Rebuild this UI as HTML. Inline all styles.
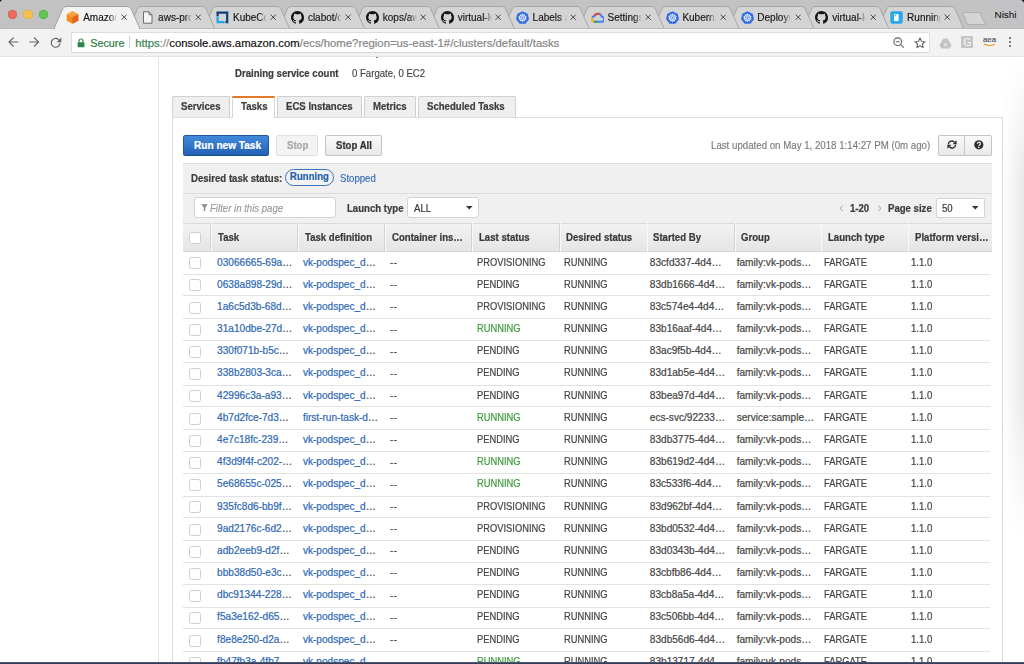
<!DOCTYPE html>
<html><head><meta charset="utf-8"><style>
html,body{margin:0;padding:0;width:1024px;height:664px;overflow:hidden;background:#fff;}
body{position:relative;font-family:"Liberation Sans", sans-serif;}
.r{position:absolute;}
.t{position:absolute;white-space:nowrap;font-family:"Liberation Sans", sans-serif;}
.t.n{-webkit-text-stroke:0.2px currentColor;}
.tabt{overflow:hidden;}
</style></head><body>
<div class="r" style="left:0.00px;top:0.00px;width:1024.00px;height:29.00px;background:linear-gradient(90deg,#c2c2c2,#c3c3c5)"></div>
<div class="r" style="left:0.00px;top:0.00px;width:2.50px;height:2.50px;background:radial-gradient(circle at 2.5px 2.5px, transparent 2px, #1a1a1a 2.5px)"></div>
<div class="r" style="left:1021.00px;top:0.00px;width:3.00px;height:3.00px;background:radial-gradient(circle at 0px 3px, transparent 2.4px, #0c1226 3px)"></div>
<div class="r" style="left:7.80px;top:9.70px;width:9.60px;height:9.60px;background:#ee6a5f;border-radius:50%;box-shadow:inset 0 0 0 0.5px #d8574c"></div>
<div class="r" style="left:23.40px;top:9.70px;width:9.60px;height:9.60px;background:#f5bf4f;border-radius:50%;box-shadow:inset 0 0 0 0.5px #d9a53a"></div>
<div class="r" style="left:38.80px;top:9.70px;width:9.60px;height:9.60px;background:#61c454;border-radius:50%;box-shadow:inset 0 0 0 0.5px #4aa83d"></div>
<svg class="r" style="left:0;top:0" width="1024" height="30" viewBox="0 0 1024 30"><path d="M877.90,28.5 L886.70,8.7 Q887.90,6.5 889.90,6.5 L951.70,6.5 Q953.70,6.5 954.90,8.7 L963.70,28.5 Z" fill="#d4d4d4" stroke="#a2a2a2" stroke-width="0.9"/></svg>
<svg class="r" style="left:890.30px;top:11.20px" width="13" height="13" viewBox="0 0 13 13"><rect x="0.3" y="0.3" width="12.4" height="12.4" rx="2" fill="#2aa7e8"/><path d="M4,3 H8.6 V10 H4 V5.2 Z" fill="#fff"/><path d="M4,5.2 L6.2,3 V5.2 Z" fill="#2aa7e8"/></svg>
<div class="t tabt" style="-webkit-text-stroke:0.15px currentColor;left:907.10px;top:12.84px;width:34px;font-size:10px;line-height:10px;color:#161616;-webkit-mask-image:linear-gradient(90deg,#000 78%,transparent 100%)">Running Tasks</div>
<svg class="r" style="left:944.40px;top:14.40px" width="6.4" height="6.4" viewBox="0 0 6.4 6.4"><path d="M0.6,0.6 L5.8,5.8 M5.8,0.6 L0.6,5.8" stroke="#404040" stroke-width="0.95"/></svg>
<svg class="r" style="left:0;top:0" width="1024" height="30" viewBox="0 0 1024 30"><path d="M803.00,28.5 L811.80,8.7 Q813.00,6.5 815.00,6.5 L876.80,6.5 Q878.80,6.5 880.00,8.7 L888.80,28.5 Z" fill="#d4d4d4" stroke="#a2a2a2" stroke-width="0.9"/></svg>
<svg class="r" style="left:815.40px;top:11.20px" width="13" height="13" viewBox="0 0 13 13"><g transform="scale(0.8125)"><path fill-rule="evenodd" fill="#141414" d="M8 0C3.58 0 0 3.58 0 8c0 3.54 2.29 6.53 5.47 7.59.4.07.55-.17.55-.38 0-.19-.01-.82-.01-1.49-2.01.37-2.53-.49-2.69-.94-.09-.23-.48-.94-.82-1.13-.28-.15-.68-.52-.01-.53.63-.01 1.08.58 1.23.82.72 1.21 1.870.87 2.330.66.07-.52.28-.87.51-1.07-1.78-.2-3.64-.89-3.64-3.95 0-.87.31-1.59.82-2.150-.08-.2-.36-1.02.08-2.12 0 0 .67-.21 2.2.82.64-.18 1.32-.27 2-.27.68 0 1.36.09 2 .27 1.53-1.04 2.2-.82 2.2-.82.44 1.1.16 1.92.08 2.12.51.56.82 1.27.82 2.15 0 3.07-1.87 3.75-3.65 3.95.29.25.54.73.54 1.48 0 1.07-.01 1.93-.01 2.2 0 .21.15.46.55.38A8.013 8.013 0 0016 8c0-4.42-3.58-8-8-8z"/></g></svg>
<div class="t tabt" style="-webkit-text-stroke:0.15px currentColor;left:832.20px;top:12.84px;width:34px;font-size:10px;line-height:10px;color:#161616;-webkit-mask-image:linear-gradient(90deg,#000 78%,transparent 100%)">virtual-kubelet</div>
<svg class="r" style="left:869.50px;top:14.40px" width="6.4" height="6.4" viewBox="0 0 6.4 6.4"><path d="M0.6,0.6 L5.8,5.8 M5.8,0.6 L0.6,5.8" stroke="#404040" stroke-width="0.95"/></svg>
<svg class="r" style="left:0;top:0" width="1024" height="30" viewBox="0 0 1024 30"><path d="M728.10,28.5 L736.90,8.7 Q738.10,6.5 740.10,6.5 L801.90,6.5 Q803.90,6.5 805.10,8.7 L813.90,28.5 Z" fill="#d4d4d4" stroke="#a2a2a2" stroke-width="0.9"/></svg>
<svg class="r" style="left:740.50px;top:11.20px" width="13" height="13" viewBox="0 0 13 13"><polygon points="6.5,0.2 11.7,2.7 13,8.3 9.4,12.7 3.6,12.7 0,8.3 1.3,2.7" fill="#326ce5"/><circle cx="6.5" cy="6.8" r="3.1" fill="none" stroke="#fff" stroke-width="0.9"/><path d="M6.5,2.4 V11.2 M2.4,5.5 L10.6,8.1 M10.6,5.5 L2.4,8.1 M4.1,10.3 L8.9,3.3 M8.9,10.3 L4.1,3.3" stroke="#fff" stroke-width="0.6"/><circle cx="6.5" cy="6.8" r="1.1" fill="#326ce5" stroke="#fff" stroke-width="0.5"/></svg>
<div class="t tabt" style="-webkit-text-stroke:0.15px currentColor;left:757.30px;top:12.84px;width:34px;font-size:10px;line-height:10px;color:#161616;-webkit-mask-image:linear-gradient(90deg,#000 78%,transparent 100%)">Deployments</div>
<svg class="r" style="left:794.60px;top:14.40px" width="6.4" height="6.4" viewBox="0 0 6.4 6.4"><path d="M0.6,0.6 L5.8,5.8 M5.8,0.6 L0.6,5.8" stroke="#404040" stroke-width="0.95"/></svg>
<svg class="r" style="left:0;top:0" width="1024" height="30" viewBox="0 0 1024 30"><path d="M653.20,28.5 L662.00,8.7 Q663.20,6.5 665.20,6.5 L727.00,6.5 Q729.00,6.5 730.20,8.7 L739.00,28.5 Z" fill="#d4d4d4" stroke="#a2a2a2" stroke-width="0.9"/></svg>
<svg class="r" style="left:665.60px;top:11.20px" width="13" height="13" viewBox="0 0 13 13"><polygon points="6.5,0.2 11.7,2.7 13,8.3 9.4,12.7 3.6,12.7 0,8.3 1.3,2.7" fill="#326ce5"/><circle cx="6.5" cy="6.8" r="3.1" fill="none" stroke="#fff" stroke-width="0.9"/><path d="M6.5,2.4 V11.2 M2.4,5.5 L10.6,8.1 M10.6,5.5 L2.4,8.1 M4.1,10.3 L8.9,3.3 M8.9,10.3 L4.1,3.3" stroke="#fff" stroke-width="0.6"/><circle cx="6.5" cy="6.8" r="1.1" fill="#326ce5" stroke="#fff" stroke-width="0.5"/></svg>
<div class="t tabt" style="-webkit-text-stroke:0.15px currentColor;left:682.40px;top:12.84px;width:34px;font-size:10px;line-height:10px;color:#161616;-webkit-mask-image:linear-gradient(90deg,#000 78%,transparent 100%)">Kubernetes</div>
<svg class="r" style="left:719.70px;top:14.40px" width="6.4" height="6.4" viewBox="0 0 6.4 6.4"><path d="M0.6,0.6 L5.8,5.8 M5.8,0.6 L0.6,5.8" stroke="#404040" stroke-width="0.95"/></svg>
<svg class="r" style="left:0;top:0" width="1024" height="30" viewBox="0 0 1024 30"><path d="M578.30,28.5 L587.10,8.7 Q588.30,6.5 590.30,6.5 L652.10,6.5 Q654.10,6.5 655.30,8.7 L664.10,28.5 Z" fill="#d4d4d4" stroke="#a2a2a2" stroke-width="0.9"/></svg>
<svg class="r" style="left:590.70px;top:11.20px" width="13" height="13" viewBox="0 0 13 13"><path d="M3.2,10.8 A3,3 0 0 1 3.4,5 A3.8,3.8 0 0 1 10.6,5.6 A2.6,2.6 0 0 1 10,10.8 Z" fill="none" stroke="#4285f4" stroke-width="2"/><path d="M3.2,10.8 A3,3 0 0 1 1.2,6.5" fill="none" stroke="#fbbc05" stroke-width="2"/><path d="M3.3,10.8 H6.8" stroke="#34a853" stroke-width="2"/><path d="M3.4,5 A3.8,3.8 0 0 1 8.8,3.3" fill="none" stroke="#ea4335" stroke-width="2"/></svg>
<div class="t tabt" style="-webkit-text-stroke:0.15px currentColor;left:607.50px;top:12.84px;width:34px;font-size:10px;line-height:10px;color:#161616;-webkit-mask-image:linear-gradient(90deg,#000 78%,transparent 100%)">Settings</div>
<svg class="r" style="left:644.80px;top:14.40px" width="6.4" height="6.4" viewBox="0 0 6.4 6.4"><path d="M0.6,0.6 L5.8,5.8 M5.8,0.6 L0.6,5.8" stroke="#404040" stroke-width="0.95"/></svg>
<svg class="r" style="left:0;top:0" width="1024" height="30" viewBox="0 0 1024 30"><path d="M503.40,28.5 L512.20,8.7 Q513.40,6.5 515.40,6.5 L577.20,6.5 Q579.20,6.5 580.40,8.7 L589.20,28.5 Z" fill="#d4d4d4" stroke="#a2a2a2" stroke-width="0.9"/></svg>
<svg class="r" style="left:515.80px;top:11.20px" width="13" height="13" viewBox="0 0 13 13"><polygon points="6.5,0.2 11.7,2.7 13,8.3 9.4,12.7 3.6,12.7 0,8.3 1.3,2.7" fill="#326ce5"/><circle cx="6.5" cy="6.8" r="3.1" fill="none" stroke="#fff" stroke-width="0.9"/><path d="M6.5,2.4 V11.2 M2.4,5.5 L10.6,8.1 M10.6,5.5 L2.4,8.1 M4.1,10.3 L8.9,3.3 M8.9,10.3 L4.1,3.3" stroke="#fff" stroke-width="0.6"/><circle cx="6.5" cy="6.8" r="1.1" fill="#326ce5" stroke="#fff" stroke-width="0.5"/></svg>
<div class="t tabt" style="-webkit-text-stroke:0.15px currentColor;left:532.60px;top:12.84px;width:34px;font-size:10px;line-height:10px;color:#161616;-webkit-mask-image:linear-gradient(90deg,#000 78%,transparent 100%)">Labels and</div>
<svg class="r" style="left:569.90px;top:14.40px" width="6.4" height="6.4" viewBox="0 0 6.4 6.4"><path d="M0.6,0.6 L5.8,5.8 M5.8,0.6 L0.6,5.8" stroke="#404040" stroke-width="0.95"/></svg>
<svg class="r" style="left:0;top:0" width="1024" height="30" viewBox="0 0 1024 30"><path d="M428.50,28.5 L437.30,8.7 Q438.50,6.5 440.50,6.5 L502.30,6.5 Q504.30,6.5 505.50,8.7 L514.30,28.5 Z" fill="#d4d4d4" stroke="#a2a2a2" stroke-width="0.9"/></svg>
<svg class="r" style="left:440.90px;top:11.20px" width="13" height="13" viewBox="0 0 13 13"><g transform="scale(0.8125)"><path fill-rule="evenodd" fill="#141414" d="M8 0C3.58 0 0 3.58 0 8c0 3.54 2.29 6.53 5.47 7.59.4.07.55-.17.55-.38 0-.19-.01-.82-.01-1.49-2.01.37-2.53-.49-2.69-.94-.09-.23-.48-.94-.82-1.13-.28-.15-.68-.52-.01-.53.63-.01 1.08.58 1.23.82.72 1.21 1.870.87 2.330.66.07-.52.28-.87.51-1.07-1.78-.2-3.64-.89-3.64-3.95 0-.87.31-1.59.82-2.150-.08-.2-.36-1.02.08-2.12 0 0 .67-.21 2.2.82.64-.18 1.32-.27 2-.27.68 0 1.36.09 2 .27 1.53-1.04 2.2-.82 2.2-.82.44 1.1.16 1.92.08 2.12.51.56.82 1.27.82 2.15 0 3.07-1.87 3.75-3.65 3.95.29.25.54.73.54 1.48 0 1.07-.01 1.93-.01 2.2 0 .21.15.46.55.38A8.013 8.013 0 0016 8c0-4.42-3.58-8-8-8z"/></g></svg>
<div class="t tabt" style="-webkit-text-stroke:0.15px currentColor;left:457.70px;top:12.84px;width:34px;font-size:10px;line-height:10px;color:#161616;-webkit-mask-image:linear-gradient(90deg,#000 78%,transparent 100%)">virtual-kubelet</div>
<svg class="r" style="left:495.00px;top:14.40px" width="6.4" height="6.4" viewBox="0 0 6.4 6.4"><path d="M0.6,0.6 L5.8,5.8 M5.8,0.6 L0.6,5.8" stroke="#404040" stroke-width="0.95"/></svg>
<svg class="r" style="left:0;top:0" width="1024" height="30" viewBox="0 0 1024 30"><path d="M353.60,28.5 L362.40,8.7 Q363.60,6.5 365.60,6.5 L427.40,6.5 Q429.40,6.5 430.60,8.7 L439.40,28.5 Z" fill="#d4d4d4" stroke="#a2a2a2" stroke-width="0.9"/></svg>
<svg class="r" style="left:366.00px;top:11.20px" width="13" height="13" viewBox="0 0 13 13"><g transform="scale(0.8125)"><path fill-rule="evenodd" fill="#141414" d="M8 0C3.58 0 0 3.58 0 8c0 3.54 2.29 6.53 5.47 7.59.4.07.55-.17.55-.38 0-.19-.01-.82-.01-1.49-2.01.37-2.53-.49-2.69-.94-.09-.23-.48-.94-.82-1.13-.28-.15-.68-.52-.01-.53.63-.01 1.08.58 1.23.82.72 1.21 1.870.87 2.330.66.07-.52.28-.87.51-1.07-1.78-.2-3.64-.89-3.64-3.95 0-.87.31-1.59.82-2.150-.08-.2-.36-1.02.08-2.12 0 0 .67-.21 2.2.82.64-.18 1.32-.27 2-.27.68 0 1.36.09 2 .27 1.53-1.04 2.2-.82 2.2-.82.44 1.1.16 1.92.08 2.12.51.56.82 1.27.82 2.15 0 3.07-1.87 3.75-3.65 3.95.29.25.54.73.54 1.48 0 1.07-.01 1.93-.01 2.2 0 .21.15.46.55.38A8.013 8.013 0 0016 8c0-4.42-3.58-8-8-8z"/></g></svg>
<div class="t tabt" style="-webkit-text-stroke:0.15px currentColor;left:382.80px;top:12.84px;width:34px;font-size:10px;line-height:10px;color:#161616;-webkit-mask-image:linear-gradient(90deg,#000 78%,transparent 100%)">kops/aws</div>
<svg class="r" style="left:420.10px;top:14.40px" width="6.4" height="6.4" viewBox="0 0 6.4 6.4"><path d="M0.6,0.6 L5.8,5.8 M5.8,0.6 L0.6,5.8" stroke="#404040" stroke-width="0.95"/></svg>
<svg class="r" style="left:0;top:0" width="1024" height="30" viewBox="0 0 1024 30"><path d="M278.70,28.5 L287.50,8.7 Q288.70,6.5 290.70,6.5 L352.50,6.5 Q354.50,6.5 355.70,8.7 L364.50,28.5 Z" fill="#d4d4d4" stroke="#a2a2a2" stroke-width="0.9"/></svg>
<svg class="r" style="left:291.10px;top:11.20px" width="13" height="13" viewBox="0 0 13 13"><g transform="scale(0.8125)"><path fill-rule="evenodd" fill="#141414" d="M8 0C3.58 0 0 3.58 0 8c0 3.54 2.29 6.53 5.47 7.59.4.07.55-.17.55-.38 0-.19-.01-.82-.01-1.49-2.01.37-2.53-.49-2.69-.94-.09-.23-.48-.94-.82-1.13-.28-.15-.68-.52-.01-.53.63-.01 1.08.58 1.23.82.72 1.21 1.870.87 2.330.66.07-.52.28-.87.51-1.07-1.78-.2-3.64-.89-3.64-3.95 0-.87.31-1.59.82-2.150-.08-.2-.36-1.02.08-2.12 0 0 .67-.21 2.2.82.64-.18 1.32-.27 2-.27.68 0 1.36.09 2 .27 1.53-1.04 2.2-.82 2.2-.82.44 1.1.16 1.92.08 2.12.51.56.82 1.27.82 2.15 0 3.07-1.87 3.75-3.65 3.95.29.25.54.73.54 1.48 0 1.07-.01 1.93-.01 2.2 0 .21.15.46.55.38A8.013 8.013 0 0016 8c0-4.42-3.58-8-8-8z"/></g></svg>
<div class="t tabt" style="-webkit-text-stroke:0.15px currentColor;left:307.90px;top:12.84px;width:34px;font-size:10px;line-height:10px;color:#161616;-webkit-mask-image:linear-gradient(90deg,#000 78%,transparent 100%)">clabot/cla</div>
<svg class="r" style="left:345.20px;top:14.40px" width="6.4" height="6.4" viewBox="0 0 6.4 6.4"><path d="M0.6,0.6 L5.8,5.8 M5.8,0.6 L0.6,5.8" stroke="#404040" stroke-width="0.95"/></svg>
<svg class="r" style="left:0;top:0" width="1024" height="30" viewBox="0 0 1024 30"><path d="M203.80,28.5 L212.60,8.7 Q213.80,6.5 215.80,6.5 L277.60,6.5 Q279.60,6.5 280.80,8.7 L289.60,28.5 Z" fill="#d4d4d4" stroke="#a2a2a2" stroke-width="0.9"/></svg>
<svg class="r" style="left:216.20px;top:11.20px" width="13" height="13" viewBox="0 0 13 13"><path d="M0.5,0.5 H12.3 V12.3 H9.5 V10 H10.1 V2.7 H2.7 V5 H0.5 Z" fill="#0d3f74"/><path d="M0.5,5.2 H2.7 V10 H8.6 V12.3 H0.5 Z" fill="#27a5e6"/></svg>
<div class="t tabt" style="-webkit-text-stroke:0.15px currentColor;left:233.00px;top:12.84px;width:34px;font-size:10px;line-height:10px;color:#161616;-webkit-mask-image:linear-gradient(90deg,#000 78%,transparent 100%)">KubeCon</div>
<svg class="r" style="left:270.30px;top:14.40px" width="6.4" height="6.4" viewBox="0 0 6.4 6.4"><path d="M0.6,0.6 L5.8,5.8 M5.8,0.6 L0.6,5.8" stroke="#404040" stroke-width="0.95"/></svg>
<svg class="r" style="left:0;top:0" width="1024" height="30" viewBox="0 0 1024 30"><path d="M128.90,28.5 L137.70,8.7 Q138.90,6.5 140.90,6.5 L202.70,6.5 Q204.70,6.5 205.90,8.7 L214.70,28.5 Z" fill="#d4d4d4" stroke="#a2a2a2" stroke-width="0.9"/></svg>
<svg class="r" style="left:141.30px;top:11.20px" width="13" height="13" viewBox="0 0 13 13"><path d="M2.5,0.8 H8 L11,3.8 V12.2 H2.5 Z" fill="#f4f4f4" stroke="#606060" stroke-width="0.9"/><path d="M8,0.8 V3.8 H11" fill="none" stroke="#606060" stroke-width="0.9"/></svg>
<div class="t tabt" style="-webkit-text-stroke:0.15px currentColor;left:158.10px;top:12.84px;width:34px;font-size:10px;line-height:10px;color:#161616;-webkit-mask-image:linear-gradient(90deg,#000 78%,transparent 100%)">aws-provider</div>
<svg class="r" style="left:195.40px;top:14.40px" width="6.4" height="6.4" viewBox="0 0 6.4 6.4"><path d="M0.6,0.6 L5.8,5.8 M5.8,0.6 L0.6,5.8" stroke="#404040" stroke-width="0.95"/></svg>
<svg class="r" style="left:0;top:0" width="1024" height="30" viewBox="0 0 1024 30"><path d="M54.00,28.5 L62.80,8.7 Q64.00,6.5 66.00,6.5 L127.80,6.5 Q129.80,6.5 131.00,8.7 L139.80,28.5 Z" fill="#f2f2f2" stroke="#9c9c9c" stroke-width="0.9"/></svg>
<svg class="r" style="left:66.40px;top:11.20px" width="13" height="13" viewBox="0 0 13 13"><polygon points="6.5,0.3 12.3,3.3 12.3,9.7 6.5,12.8 0.7,9.7 0.7,3.3" fill="#f58a1f"/><polygon points="6.5,0.3 12.3,3.3 6.5,6.3 0.7,3.3" fill="#f9a546"/><polygon points="6.5,6.3 12.3,3.3 12.3,9.7 6.5,12.8" fill="#e2621e"/></svg>
<div class="t tabt" style="-webkit-text-stroke:0.15px currentColor;left:83.20px;top:12.84px;width:34px;font-size:10px;line-height:10px;color:#111;-webkit-mask-image:linear-gradient(90deg,#000 78%,transparent 100%)">Amazon Web</div>
<svg class="r" style="left:120.50px;top:14.40px" width="6.4" height="6.4" viewBox="0 0 6.4 6.4"><path d="M0.6,0.6 L5.8,5.8 M5.8,0.6 L0.6,5.8" stroke="#404040" stroke-width="0.95"/></svg>
<div class="r" style="left:0.00px;top:28.00px;width:54.00px;height:1.00px;background:#bababa"></div>
<div class="r" style="left:139.80px;top:28.00px;width:884.20px;height:1.00px;background:#bababa"></div>
<svg class="r" style="left:960.00px;top:11.00px" width="28" height="15" viewBox="0 0 28 15"><path d="M2.5,1.5 H19.5 L25.5,13.5 H7.5 Z" fill="#d4d4d4" stroke="#a9a9a9" stroke-width="0.8"/></svg>
<div class="t n" style="left:994.50px;top:10.22px;font-size:9.9px;line-height:9.9px;color:#0e0e0e;font-weight:400;font-style:normal;-webkit-text-stroke:0.05px currentColor;">Nishi</div>
<div class="r" style="left:0.00px;top:29.00px;width:1024.00px;height:27.00px;background:#f2f2f2"></div>
<div class="r" style="left:54.50px;top:28.00px;width:84.80px;height:1.50px;background:#f2f2f2"></div>
<div class="r" style="left:0.00px;top:56.00px;width:1024.00px;height:1.00px;background:#e4e4e4"></div>
<svg class="r" style="left:7.50px;top:37.00px" width="11" height="10" viewBox="0 0 11 10"><path d="M10.3,5 H1.2 M5.6,0.5 L1,5 L5.6,9.5" fill="none" stroke="#686868" stroke-width="1.15"/></svg>
<svg class="r" style="left:28.70px;top:37.00px" width="11" height="10" viewBox="0 0 11 10"><path d="M0.3,5 H9.4 M5,0.5 L9.6,5 L5,9.5" fill="none" stroke="#686868" stroke-width="1.15"/></svg>
<svg class="r" style="left:49.70px;top:36.60px" width="12" height="12" viewBox="0 0 12 12"><path d="M10,6.3 A4.4,4.4 0 1 1 8.6,2.6" fill="none" stroke="#5f5f5f" stroke-width="1.2"/><path d="M11.3,0.6 V5.2 H6.7 Z" fill="#5f5f5f"/></svg>
<div class="r" style="left:70.80px;top:32.00px;width:859.40px;height:21.00px;background:#fff;border:1px solid #dedede;border-bottom-color:#d4d4d4;border-radius:2px;box-sizing:border-box"></div>
<svg class="r" style="left:77.00px;top:37.50px" width="8" height="10" viewBox="0 0 8 10"><path d="M2,4.3 V3 A2,2 0 0 1 6,3 V4.3" fill="none" stroke="#2d8544" stroke-width="1.2"/><rect x="0.6" y="4.2" width="6.8" height="5" rx="0.6" fill="#2d8544"/></svg>
<div class="t n" style="left:90.20px;top:38.16px;font-size:10.8px;line-height:10.8px;color:#2f8046;font-weight:400;font-style:normal;">Secure</div>
<div class="r" style="left:129.20px;top:36.00px;width:0.80px;height:12.30px;background:#d0d0d0"></div>
<div class="t n" style="left:135.20px;top:37.79px;font-size:11.35px;line-height:11.35px;color:#777;font-weight:400;font-style:normal;"><span style="color:#3a8452">https</span><span style="color:#8a8a8a">://</span><span style="color:#111">console.aws.amazon.com</span><span style="color:#858585">/ecs/home?region=us-east-1#/clusters/default/tasks</span></div>
<svg class="r" style="left:893.00px;top:37.00px" width="12" height="11" viewBox="0 0 12 11"><circle cx="4.7" cy="4.7" r="3.8" fill="none" stroke="#5f5f5f" stroke-width="1.1"/><path d="M2.8,4.7 H6.6 M7.4,7.4 L10.8,10.6" stroke="#5f5f5f" stroke-width="1.1"/></svg>
<svg class="r" style="left:914.00px;top:36.50px" width="12" height="12" viewBox="0 0 12 12"><path d="M6,1 L7.5,4.4 L11.1,4.7 L8.4,7 L9.2,10.6 L6,8.7 L2.8,10.6 L3.6,7 L0.9,4.7 L4.5,4.4 Z" fill="none" stroke="#5f5f5f" stroke-width="1.05" stroke-linejoin="round"/></svg>
<svg class="r" style="left:938.50px;top:37.50px" width="13" height="11" viewBox="0 0 13 11"><path d="M4.3,0.5 H8.7 L12.6,7.2 L10.4,10.6 H2.6 L0.4,7.2 Z" fill="#c4c4c4"/><path d="M6.5,4.5 L8.4,7.7 H4.6 Z" fill="#e8e8e8"/></svg>
<div class="r" style="left:961.00px;top:36.00px;width:12.00px;height:12.40px;background:#c6c6c6"></div>
<div class="t n" style="left:963.60px;top:37.53px;font-size:10px;line-height:10px;color:#f7f7f7;font-weight:400;font-style:normal;-webkit-text-stroke:0px currentColor;">G</div>
<div class="t n" style="left:983.00px;top:36.40px;font-size:7.8px;line-height:7.8px;color:#505a68;font-weight:400;font-style:normal;letter-spacing:-0.2px-webkit-text-stroke:0px currentColor;">aea</div>
<svg class="r" style="left:982.50px;top:43.00px" width="13" height="4" viewBox="0 0 13 4"><path d="M0.8,1 Q6,4 11.8,1.2" fill="none" stroke="#f39a21" stroke-width="1.1"/></svg>
<div class="r" style="left:1008.80px;top:36.70px;width:2.30px;height:2.30px;background:#555;border-radius:50%"></div>
<div class="r" style="left:1008.80px;top:40.90px;width:2.30px;height:2.30px;background:#555;border-radius:50%"></div>
<div class="r" style="left:1008.80px;top:45.20px;width:2.30px;height:2.30px;background:#555;border-radius:50%"></div>
<div class="r" style="left:0.00px;top:57.00px;width:1024.00px;height:605.00px;background:#fff"></div>
<div class="r" style="left:158.00px;top:56.30px;width:1.00px;height:605.70px;background:#e3e3e3"></div>
<div class="r" style="left:1003.00px;top:57.00px;width:21.00px;height:605.00px;background:linear-gradient(90deg, rgba(0,0,0,0) 0%, rgba(0,0,0,0.095) 100%);-webkit-mask-image:linear-gradient(180deg, rgba(0,0,0,0) 0px, rgba(0,0,0,0.5) 70px, #000 130px, #000 330px, rgba(0,0,0,0.4) 420px, rgba(0,0,0,0) 480px)"></div>
<div class="r" style="left:375.50px;top:56.60px;width:2.50px;height:1.00px;background:#777"></div>
<div class="t" style="left:235.20px;top:69.27px;font-size:10.08px;line-height:10.08px;color:#3d3d3d;font-weight:700;font-style:normal;transform:scaleX(0.9524);transform-origin:0 0;-webkit-text-stroke:0.22px currentColor;">Draining service count</div>
<div class="t n" style="left:352.00px;top:69.27px;font-size:10.08px;line-height:10.08px;color:#444;font-weight:400;font-style:normal;transform:scaleX(0.9524);transform-origin:0 0;-webkit-text-stroke:0.15px currentColor;">0 Fargate, 0 EC2</div>
<div class="r" style="left:172.20px;top:117.00px;width:830.60px;height:560.00px;border:1px solid #dcdcdc;background:#fff;box-sizing:border-box"></div>
<div class="r" style="left:172.10px;top:95.80px;width:57.70px;height:21.40px;background:#efefef;border:1px solid #d0d0d0;border-bottom:none;box-sizing:border-box;border-radius:2px 2px 0 0"></div>
<div class="t" style="left:181.30px;top:101.87px;font-size:10.08px;line-height:10.08px;color:#3d3d3d;font-weight:700;font-style:normal;transform:scaleX(0.9524);transform-origin:0 0;-webkit-text-stroke:0.22px currentColor;">Services</div>
<div class="r" style="left:231.60px;top:95.80px;width:43.70px;height:22.20px;background:#fff;border:1px solid #d6d6d6;border-bottom:none;border-top:2px solid #e07b2a;box-sizing:border-box"></div>
<div class="t" style="left:240.70px;top:101.87px;font-size:10.08px;line-height:10.08px;color:#3d3d3d;font-weight:700;font-style:normal;transform:scaleX(0.9524);transform-origin:0 0;-webkit-text-stroke:0.22px currentColor;">Tasks</div>
<div class="r" style="left:277.10px;top:95.80px;width:84.90px;height:21.40px;background:#efefef;border:1px solid #d0d0d0;border-bottom:none;box-sizing:border-box;border-radius:2px 2px 0 0"></div>
<div class="t" style="left:286.20px;top:101.87px;font-size:10.08px;line-height:10.08px;color:#3d3d3d;font-weight:700;font-style:normal;transform:scaleX(0.9524);transform-origin:0 0;-webkit-text-stroke:0.22px currentColor;">ECS Instances</div>
<div class="r" style="left:364.20px;top:95.80px;width:51.80px;height:21.40px;background:#efefef;border:1px solid #d0d0d0;border-bottom:none;box-sizing:border-box;border-radius:2px 2px 0 0"></div>
<div class="t" style="left:373.30px;top:101.87px;font-size:10.08px;line-height:10.08px;color:#3d3d3d;font-weight:700;font-style:normal;transform:scaleX(0.9524);transform-origin:0 0;-webkit-text-stroke:0.22px currentColor;">Metrics</div>
<div class="r" style="left:417.90px;top:95.80px;width:98.00px;height:21.40px;background:#efefef;border:1px solid #d0d0d0;border-bottom:none;box-sizing:border-box;border-radius:2px 2px 0 0"></div>
<div class="t" style="left:427.00px;top:101.87px;font-size:10.08px;line-height:10.08px;color:#3d3d3d;font-weight:700;font-style:normal;transform:scaleX(0.9524);transform-origin:0 0;-webkit-text-stroke:0.22px currentColor;">Scheduled Tasks</div>
<div class="r" style="left:183.10px;top:135.00px;width:85.50px;height:20.80px;background:linear-gradient(#4189dc,#2461b4);border:1px solid #1f57a3;border-bottom-color:#1a4c90;border-radius:2.5px;box-sizing:border-box"></div>
<div class="t" style="left:194.00px;top:141.37px;font-size:10.08px;line-height:10.08px;color:#fff;font-weight:700;font-style:normal;text-shadow:0 -0.5px 0 rgba(0,0,0,0.3)transform:scaleX(0.9524);transform-origin:0 0;-webkit-text-stroke:0.22px currentColor;">Run new Task</div>
<div class="r" style="left:276.00px;top:135.00px;width:41.80px;height:20.80px;background:#f3f3f3;border:1px solid #e0e0e0;border-radius:2px;box-sizing:border-box"></div>
<div class="t" style="left:286.50px;top:141.37px;font-size:10.08px;line-height:10.08px;color:#a8a8a8;font-weight:700;font-style:normal;transform:scaleX(0.9524);transform-origin:0 0;-webkit-text-stroke:0.22px currentColor;">Stop</div>
<div class="r" style="left:325.20px;top:135.00px;width:56.80px;height:20.80px;background:linear-gradient(#fafafa,#e9e9e9);border:1px solid #c4c4c4;border-radius:2px;box-sizing:border-box"></div>
<div class="t" style="left:335.50px;top:141.37px;font-size:10.08px;line-height:10.08px;color:#333;font-weight:700;font-style:normal;transform:scaleX(0.9524);transform-origin:0 0;-webkit-text-stroke:0.22px currentColor;">Stop All</div>
<div class="t n" style="left:711.00px;top:139.97px;font-size:10.67px;line-height:10.67px;color:#7a7a7a;font-weight:400;font-style:normal;transform:scaleX(0.9091);transform-origin:0 0;-webkit-text-stroke:0.15px currentColor;">Last updated on May 1, 2018 1:14:27 PM (0m ago)</div>
<div class="r" style="left:938.00px;top:135.00px;width:53.80px;height:20.80px;background:linear-gradient(#fafafa,#e9e9e9);border:1px solid #c4c4c4;border-radius:2px;box-sizing:border-box"></div>
<div class="r" style="left:964.30px;top:135.60px;width:0.80px;height:20.00px;background:#c8c8c8"></div>
<svg class="r" style="left:946.50px;top:140.20px" width="10" height="9" viewBox="0 0 10 9"><path d="M1.3,4.3 A3.6,3.6 0 0 1 7.6,2.3" fill="none" stroke="#2b2b2b" stroke-width="1.3"/><path d="M9.6,0.3 V4.3 H5.6 Z" fill="#2b2b2b"/><path d="M8.7,4.7 A3.6,3.6 0 0 1 2.4,6.7" fill="none" stroke="#2b2b2b" stroke-width="1.3"/><path d="M0.4,8.7 V4.7 H4.4 Z" fill="#2b2b2b"/></svg>
<svg class="r" style="left:973.50px;top:140.20px" width="10" height="10" viewBox="0 0 10 10"><circle cx="4.8" cy="4.8" r="4.6" fill="#2e2e2e"/><path d="M3.3,3.7 A1.55,1.5 0 1 1 5.6,5 C5,5.35 4.8,5.7 4.8,6.2" fill="none" stroke="#fff" stroke-width="1.15"/><rect x="4.15" y="6.9" width="1.3" height="1.2" fill="#fff"/></svg>
<div class="r" style="left:183.10px;top:162.50px;width:808.70px;height:60.60px;background:#f0f0f0;border-top:1px solid #dcdcdc;box-sizing:border-box"></div>
<div class="r" style="left:183.10px;top:192.80px;width:808.70px;height:1.00px;background:#dcdcdc"></div>
<div class="t" style="left:190.70px;top:173.67px;font-size:10.08px;line-height:10.08px;color:#3d3d3d;font-weight:700;font-style:normal;transform:scaleX(0.9524);transform-origin:0 0;-webkit-text-stroke:0.22px currentColor;">Desired task status:</div>
<div class="r" style="left:285.00px;top:169.00px;width:49.20px;height:17.00px;border:1px solid #3b73c0;border-radius:9px;box-sizing:border-box;background:#f3f3f3"></div>
<div class="t" style="left:290.40px;top:172.48px;font-size:10.18px;line-height:10.18px;color:#2a63b0;font-weight:700;font-style:normal;transform:scaleX(0.9430);transform-origin:0 0;-webkit-text-stroke:0.22px currentColor;">Running</div>
<div class="t n" style="left:339.60px;top:173.67px;font-size:10.08px;line-height:10.08px;color:#2f6bba;font-weight:400;font-style:normal;transform:scaleX(0.9524);transform-origin:0 0;-webkit-text-stroke:0.15px currentColor;">Stopped</div>
<div class="r" style="left:194.40px;top:197.30px;width:142.10px;height:21.10px;background:#fff;border:1px solid #d4d4d4;border-radius:3px;box-sizing:border-box"></div>
<svg class="r" style="left:200.50px;top:203.80px" width="7" height="8" viewBox="0 0 7 8"><path d="M0.3,0.3 H6.7 L4.2,3.5 V7.6 L2.8,6.6 V3.5 Z" fill="#888"/></svg>
<div class="t n" style="left:210.00px;top:203.97px;font-size:10.08px;line-height:10.08px;color:#999;font-weight:400;font-style:italic;transform:scaleX(0.9524);transform-origin:0 0;-webkit-text-stroke:0.15px currentColor;">Filter in this page</div>
<div class="t" style="left:347.00px;top:203.97px;font-size:10.08px;line-height:10.08px;color:#3d3d3d;font-weight:700;font-style:normal;transform:scaleX(0.9524);transform-origin:0 0;-webkit-text-stroke:0.22px currentColor;">Launch type</div>
<div class="r" style="left:406.80px;top:197.30px;width:72.10px;height:21.10px;background:#fff;border:1px solid #d4d4d4;border-radius:3px;box-sizing:border-box"></div>
<div class="t n" style="left:413.50px;top:203.97px;font-size:10.08px;line-height:10.08px;color:#333;font-weight:400;font-style:normal;transform:scaleX(0.9524);transform-origin:0 0;-webkit-text-stroke:0.15px currentColor;">ALL</div>
<svg class="r" style="left:465.50px;top:206.00px" width="7" height="4" viewBox="0 0 7 4"><path d="M0,0 H6.6 L3.3,3.6 Z" fill="#333"/></svg>
<svg class="r" style="left:838.60px;top:205.40px" width="5" height="7" viewBox="0 0 5 7"><path d="M3.8,0.6 L1,3.3 L3.8,6" fill="none" stroke="#9a9a9a" stroke-width="0.9"/></svg>
<div class="t" style="left:850.30px;top:203.97px;font-size:10.08px;line-height:10.08px;color:#3d3d3d;font-weight:700;font-style:normal;transform:scaleX(0.9524);transform-origin:0 0;-webkit-text-stroke:0.22px currentColor;">1-20</div>
<svg class="r" style="left:877.20px;top:205.40px" width="5" height="7" viewBox="0 0 5 7"><path d="M1.2,0.6 L4,3.3 L1.2,6" fill="none" stroke="#9a9a9a" stroke-width="0.9"/></svg>
<div class="t" style="left:888.30px;top:203.97px;font-size:10.08px;line-height:10.08px;color:#3d3d3d;font-weight:700;font-style:normal;transform:scaleX(0.9524);transform-origin:0 0;-webkit-text-stroke:0.22px currentColor;">Page size</div>
<div class="r" style="left:935.80px;top:197.80px;width:49.00px;height:20.60px;background:#fff;border:1px solid #d4d4d4;border-radius:2px;box-sizing:border-box"></div>
<div class="t n" style="left:942.20px;top:203.97px;font-size:10.08px;line-height:10.08px;color:#333;font-weight:400;font-style:normal;transform:scaleX(0.9524);transform-origin:0 0;-webkit-text-stroke:0.15px currentColor;">50</div>
<svg class="r" style="left:971.50px;top:206.00px" width="7" height="4" viewBox="0 0 7 4"><path d="M0,0 H6.6 L3.3,3.6 Z" fill="#333"/></svg>
<div class="r" style="left:183.10px;top:222.60px;width:808.70px;height:29.60px;background:linear-gradient(#f2f2f2,#e5e5e5);border-top:1px solid #dadada;border-bottom:1px solid #d6d6d6;box-sizing:border-box"></div>
<div class="r" style="left:209.70px;top:223.00px;width:0.90px;height:28.50px;background:#d2d2d2"></div>
<div class="r" style="left:210.60px;top:223.00px;width:0.70px;height:28.50px;background:#f9f9f9"></div>
<div class="r" style="left:297.40px;top:223.00px;width:0.90px;height:28.50px;background:#d2d2d2"></div>
<div class="r" style="left:298.30px;top:223.00px;width:0.70px;height:28.50px;background:#f9f9f9"></div>
<div class="r" style="left:384.30px;top:223.00px;width:0.90px;height:28.50px;background:#d2d2d2"></div>
<div class="r" style="left:385.20px;top:223.00px;width:0.70px;height:28.50px;background:#f9f9f9"></div>
<div class="r" style="left:471.30px;top:223.00px;width:0.90px;height:28.50px;background:#d2d2d2"></div>
<div class="r" style="left:472.20px;top:223.00px;width:0.70px;height:28.50px;background:#f9f9f9"></div>
<div class="r" style="left:559.20px;top:223.00px;width:0.90px;height:28.50px;background:#d2d2d2"></div>
<div class="r" style="left:560.10px;top:223.00px;width:0.70px;height:28.50px;background:#f9f9f9"></div>
<div class="r" style="left:646.50px;top:223.00px;width:0.90px;height:28.50px;background:#d2d2d2"></div>
<div class="r" style="left:647.40px;top:223.00px;width:0.70px;height:28.50px;background:#f9f9f9"></div>
<div class="r" style="left:733.60px;top:223.00px;width:0.90px;height:28.50px;background:#d2d2d2"></div>
<div class="r" style="left:734.50px;top:223.00px;width:0.70px;height:28.50px;background:#f9f9f9"></div>
<div class="r" style="left:820.50px;top:223.00px;width:0.90px;height:28.50px;background:#d2d2d2"></div>
<div class="r" style="left:821.40px;top:223.00px;width:0.70px;height:28.50px;background:#f9f9f9"></div>
<div class="r" style="left:907.50px;top:223.00px;width:0.90px;height:28.50px;background:#d2d2d2"></div>
<div class="r" style="left:908.40px;top:223.00px;width:0.70px;height:28.50px;background:#f9f9f9"></div>
<div class="t" style="left:217.60px;top:232.87px;font-size:10.08px;line-height:10.08px;color:#3a3a3a;font-weight:700;font-style:normal;transform:scaleX(0.9524);transform-origin:0 0;-webkit-text-stroke:0.22px currentColor;">Task</div>
<div class="t" style="left:305.00px;top:232.87px;font-size:10.08px;line-height:10.08px;color:#3a3a3a;font-weight:700;font-style:normal;transform:scaleX(0.9524);transform-origin:0 0;-webkit-text-stroke:0.22px currentColor;">Task definition</div>
<div class="t" style="left:391.90px;top:232.87px;font-size:10.08px;line-height:10.08px;color:#3a3a3a;font-weight:700;font-style:normal;transform:scaleX(0.9524);transform-origin:0 0;-webkit-text-stroke:0.22px currentColor;">Container ins…</div>
<div class="t" style="left:479.20px;top:232.87px;font-size:10.08px;line-height:10.08px;color:#3a3a3a;font-weight:700;font-style:normal;transform:scaleX(0.9524);transform-origin:0 0;-webkit-text-stroke:0.22px currentColor;">Last status</div>
<div class="t" style="left:565.70px;top:232.87px;font-size:10.08px;line-height:10.08px;color:#3a3a3a;font-weight:700;font-style:normal;transform:scaleX(0.9524);transform-origin:0 0;-webkit-text-stroke:0.22px currentColor;">Desired status</div>
<div class="t" style="left:653.40px;top:232.87px;font-size:10.08px;line-height:10.08px;color:#3a3a3a;font-weight:700;font-style:normal;transform:scaleX(0.9524);transform-origin:0 0;-webkit-text-stroke:0.22px currentColor;">Started By</div>
<div class="t" style="left:741.00px;top:232.87px;font-size:10.08px;line-height:10.08px;color:#3a3a3a;font-weight:700;font-style:normal;transform:scaleX(0.9524);transform-origin:0 0;-webkit-text-stroke:0.22px currentColor;">Group</div>
<div class="t" style="left:828.00px;top:232.87px;font-size:10.08px;line-height:10.08px;color:#3a3a3a;font-weight:700;font-style:normal;transform:scaleX(0.9524);transform-origin:0 0;-webkit-text-stroke:0.22px currentColor;">Launch type</div>
<div class="t" style="left:915.30px;top:232.87px;font-size:10.08px;line-height:10.08px;color:#3a3a3a;font-weight:700;font-style:normal;transform:scaleX(0.9524);transform-origin:0 0;-webkit-text-stroke:0.22px currentColor;">Platform versi…</div>
<div class="r" style="left:189.20px;top:232.40px;width:12.00px;height:12.00px;background:#fff;border:1px solid #cfcfcf;border-radius:2.5px;box-sizing:border-box"></div>
<div class="r" style="left:183.10px;top:274.00px;width:807.00px;height:1.00px;background:#e2e2e2"></div>
<div class="r" style="left:189.20px;top:257.20px;width:12.00px;height:12.00px;background:#fff;border:1px solid #cfcfcf;border-radius:2.5px;box-sizing:border-box"></div>
<div class="t n" style="left:217.10px;top:257.55px;font-size:10.1px;line-height:10.1px;color:#2d68b5;font-weight:400;font-style:normal;">03066665-69a<span style="color:#444">…</span></div>
<div class="t n" style="left:302.90px;top:257.55px;font-size:10.1px;line-height:10.1px;color:#2d68b5;font-weight:400;font-style:normal;">vk-podspec_d<span style="color:#444">…</span></div>
<div class="t n" style="left:389.90px;top:257.97px;font-size:9.6px;line-height:9.6px;color:#444;font-weight:400;font-style:normal;letter-spacing:0.6px">--</div>
<div class="t n" style="left:476.90px;top:257.55px;font-size:10.1px;line-height:10.1px;color:#444;font-weight:400;font-style:normal;transform:scaleX(0.925);transform-origin:0 0">PROVISIONING</div>
<div class="t n" style="left:563.50px;top:257.55px;font-size:10.1px;line-height:10.1px;color:#444;font-weight:400;font-style:normal;transform:scaleX(0.925);transform-origin:0 0">RUNNING</div>
<div class="t n" style="left:649.80px;top:257.55px;font-size:10.1px;line-height:10.1px;color:#444;font-weight:400;font-style:normal;">83cfd337-4d4…</div>
<div class="t n" style="left:736.70px;top:257.55px;font-size:10.1px;line-height:10.1px;color:#444;font-weight:400;font-style:normal;">family:vk-pods…</div>
<div class="t n" style="left:823.50px;top:257.55px;font-size:10.1px;line-height:10.1px;color:#444;font-weight:400;font-style:normal;transform:scaleX(0.925);transform-origin:0 0">FARGATE</div>
<div class="t n" style="left:910.70px;top:257.55px;font-size:10.1px;line-height:10.1px;color:#444;font-weight:400;font-style:normal;transform:scaleX(0.95);transform-origin:0 0">1.1.0</div>
<div class="r" style="left:183.10px;top:295.00px;width:807.00px;height:1.00px;background:#e2e2e2"></div>
<div class="r" style="left:189.20px;top:279.40px;width:12.00px;height:12.00px;background:#fff;border:1px solid #cfcfcf;border-radius:2.5px;box-sizing:border-box"></div>
<div class="t n" style="left:217.10px;top:279.73px;font-size:10.1px;line-height:10.1px;color:#2d68b5;font-weight:400;font-style:normal;">0638a898-29d<span style="color:#444">…</span></div>
<div class="t n" style="left:302.90px;top:279.73px;font-size:10.1px;line-height:10.1px;color:#2d68b5;font-weight:400;font-style:normal;">vk-podspec_d<span style="color:#444">…</span></div>
<div class="t n" style="left:389.90px;top:280.15px;font-size:9.6px;line-height:9.6px;color:#444;font-weight:400;font-style:normal;letter-spacing:0.6px">--</div>
<div class="t n" style="left:476.90px;top:279.73px;font-size:10.1px;line-height:10.1px;color:#444;font-weight:400;font-style:normal;transform:scaleX(0.925);transform-origin:0 0">PENDING</div>
<div class="t n" style="left:563.50px;top:279.73px;font-size:10.1px;line-height:10.1px;color:#444;font-weight:400;font-style:normal;transform:scaleX(0.925);transform-origin:0 0">RUNNING</div>
<div class="t n" style="left:649.80px;top:279.73px;font-size:10.1px;line-height:10.1px;color:#444;font-weight:400;font-style:normal;">83db1666-4d4…</div>
<div class="t n" style="left:736.70px;top:279.73px;font-size:10.1px;line-height:10.1px;color:#444;font-weight:400;font-style:normal;">family:vk-pods…</div>
<div class="t n" style="left:823.50px;top:279.73px;font-size:10.1px;line-height:10.1px;color:#444;font-weight:400;font-style:normal;transform:scaleX(0.925);transform-origin:0 0">FARGATE</div>
<div class="t n" style="left:910.70px;top:279.73px;font-size:10.1px;line-height:10.1px;color:#444;font-weight:400;font-style:normal;transform:scaleX(0.95);transform-origin:0 0">1.1.0</div>
<div class="r" style="left:183.10px;top:318.00px;width:807.00px;height:1.00px;background:#e2e2e2"></div>
<div class="r" style="left:189.20px;top:301.60px;width:12.00px;height:12.00px;background:#fff;border:1px solid #cfcfcf;border-radius:2.5px;box-sizing:border-box"></div>
<div class="t n" style="left:217.10px;top:301.91px;font-size:10.1px;line-height:10.1px;color:#2d68b5;font-weight:400;font-style:normal;">1a6c5d3b-68d<span style="color:#444">…</span></div>
<div class="t n" style="left:302.90px;top:301.91px;font-size:10.1px;line-height:10.1px;color:#2d68b5;font-weight:400;font-style:normal;">vk-podspec_d<span style="color:#444">…</span></div>
<div class="t n" style="left:389.90px;top:302.33px;font-size:9.6px;line-height:9.6px;color:#444;font-weight:400;font-style:normal;letter-spacing:0.6px">--</div>
<div class="t n" style="left:476.90px;top:301.91px;font-size:10.1px;line-height:10.1px;color:#444;font-weight:400;font-style:normal;transform:scaleX(0.925);transform-origin:0 0">PROVISIONING</div>
<div class="t n" style="left:563.50px;top:301.91px;font-size:10.1px;line-height:10.1px;color:#444;font-weight:400;font-style:normal;transform:scaleX(0.925);transform-origin:0 0">RUNNING</div>
<div class="t n" style="left:649.80px;top:301.91px;font-size:10.1px;line-height:10.1px;color:#444;font-weight:400;font-style:normal;">83c574e4-4d4…</div>
<div class="t n" style="left:736.70px;top:301.91px;font-size:10.1px;line-height:10.1px;color:#444;font-weight:400;font-style:normal;">family:vk-pods…</div>
<div class="t n" style="left:823.50px;top:301.91px;font-size:10.1px;line-height:10.1px;color:#444;font-weight:400;font-style:normal;transform:scaleX(0.925);transform-origin:0 0">FARGATE</div>
<div class="t n" style="left:910.70px;top:301.91px;font-size:10.1px;line-height:10.1px;color:#444;font-weight:400;font-style:normal;transform:scaleX(0.95);transform-origin:0 0">1.1.0</div>
<div class="r" style="left:183.10px;top:340.00px;width:807.00px;height:1.00px;background:#e2e2e2"></div>
<div class="r" style="left:189.20px;top:323.80px;width:12.00px;height:12.00px;background:#fff;border:1px solid #cfcfcf;border-radius:2.5px;box-sizing:border-box"></div>
<div class="t n" style="left:217.10px;top:324.09px;font-size:10.1px;line-height:10.1px;color:#2d68b5;font-weight:400;font-style:normal;">31a10dbe-27d<span style="color:#444">…</span></div>
<div class="t n" style="left:302.90px;top:324.09px;font-size:10.1px;line-height:10.1px;color:#2d68b5;font-weight:400;font-style:normal;">vk-podspec_d<span style="color:#444">…</span></div>
<div class="t n" style="left:389.90px;top:324.51px;font-size:9.6px;line-height:9.6px;color:#444;font-weight:400;font-style:normal;letter-spacing:0.6px">--</div>
<div class="t n" style="left:476.90px;top:324.09px;font-size:10.1px;line-height:10.1px;color:#3d9b3d;font-weight:400;font-style:normal;transform:scaleX(0.925);transform-origin:0 0">RUNNING</div>
<div class="t n" style="left:563.50px;top:324.09px;font-size:10.1px;line-height:10.1px;color:#444;font-weight:400;font-style:normal;transform:scaleX(0.925);transform-origin:0 0">RUNNING</div>
<div class="t n" style="left:649.80px;top:324.09px;font-size:10.1px;line-height:10.1px;color:#444;font-weight:400;font-style:normal;">83b16aaf-4d4…</div>
<div class="t n" style="left:736.70px;top:324.09px;font-size:10.1px;line-height:10.1px;color:#444;font-weight:400;font-style:normal;">family:vk-pods…</div>
<div class="t n" style="left:823.50px;top:324.09px;font-size:10.1px;line-height:10.1px;color:#444;font-weight:400;font-style:normal;transform:scaleX(0.925);transform-origin:0 0">FARGATE</div>
<div class="t n" style="left:910.70px;top:324.09px;font-size:10.1px;line-height:10.1px;color:#444;font-weight:400;font-style:normal;transform:scaleX(0.95);transform-origin:0 0">1.1.0</div>
<div class="r" style="left:183.10px;top:362.00px;width:807.00px;height:1.00px;background:#e2e2e2"></div>
<div class="r" style="left:189.20px;top:346.00px;width:12.00px;height:12.00px;background:#fff;border:1px solid #cfcfcf;border-radius:2.5px;box-sizing:border-box"></div>
<div class="t n" style="left:217.10px;top:346.27px;font-size:10.1px;line-height:10.1px;color:#2d68b5;font-weight:400;font-style:normal;">330f071b-b5c<span style="color:#444">…</span></div>
<div class="t n" style="left:302.90px;top:346.27px;font-size:10.1px;line-height:10.1px;color:#2d68b5;font-weight:400;font-style:normal;">vk-podspec_d<span style="color:#444">…</span></div>
<div class="t n" style="left:389.90px;top:346.69px;font-size:9.6px;line-height:9.6px;color:#444;font-weight:400;font-style:normal;letter-spacing:0.6px">--</div>
<div class="t n" style="left:476.90px;top:346.27px;font-size:10.1px;line-height:10.1px;color:#444;font-weight:400;font-style:normal;transform:scaleX(0.925);transform-origin:0 0">PENDING</div>
<div class="t n" style="left:563.50px;top:346.27px;font-size:10.1px;line-height:10.1px;color:#444;font-weight:400;font-style:normal;transform:scaleX(0.925);transform-origin:0 0">RUNNING</div>
<div class="t n" style="left:649.80px;top:346.27px;font-size:10.1px;line-height:10.1px;color:#444;font-weight:400;font-style:normal;">83ac9f5b-4d4…</div>
<div class="t n" style="left:736.70px;top:346.27px;font-size:10.1px;line-height:10.1px;color:#444;font-weight:400;font-style:normal;">family:vk-pods…</div>
<div class="t n" style="left:823.50px;top:346.27px;font-size:10.1px;line-height:10.1px;color:#444;font-weight:400;font-style:normal;transform:scaleX(0.925);transform-origin:0 0">FARGATE</div>
<div class="t n" style="left:910.70px;top:346.27px;font-size:10.1px;line-height:10.1px;color:#444;font-weight:400;font-style:normal;transform:scaleX(0.95);transform-origin:0 0">1.1.0</div>
<div class="r" style="left:183.10px;top:385.00px;width:807.00px;height:1.00px;background:#e2e2e2"></div>
<div class="r" style="left:189.20px;top:368.20px;width:12.00px;height:12.00px;background:#fff;border:1px solid #cfcfcf;border-radius:2.5px;box-sizing:border-box"></div>
<div class="t n" style="left:217.10px;top:368.45px;font-size:10.1px;line-height:10.1px;color:#2d68b5;font-weight:400;font-style:normal;">338b2803-3ca<span style="color:#444">…</span></div>
<div class="t n" style="left:302.90px;top:368.45px;font-size:10.1px;line-height:10.1px;color:#2d68b5;font-weight:400;font-style:normal;">vk-podspec_d<span style="color:#444">…</span></div>
<div class="t n" style="left:389.90px;top:368.87px;font-size:9.6px;line-height:9.6px;color:#444;font-weight:400;font-style:normal;letter-spacing:0.6px">--</div>
<div class="t n" style="left:476.90px;top:368.45px;font-size:10.1px;line-height:10.1px;color:#444;font-weight:400;font-style:normal;transform:scaleX(0.925);transform-origin:0 0">PENDING</div>
<div class="t n" style="left:563.50px;top:368.45px;font-size:10.1px;line-height:10.1px;color:#444;font-weight:400;font-style:normal;transform:scaleX(0.925);transform-origin:0 0">RUNNING</div>
<div class="t n" style="left:649.80px;top:368.45px;font-size:10.1px;line-height:10.1px;color:#444;font-weight:400;font-style:normal;">83d1ab5e-4d4…</div>
<div class="t n" style="left:736.70px;top:368.45px;font-size:10.1px;line-height:10.1px;color:#444;font-weight:400;font-style:normal;">family:vk-pods…</div>
<div class="t n" style="left:823.50px;top:368.45px;font-size:10.1px;line-height:10.1px;color:#444;font-weight:400;font-style:normal;transform:scaleX(0.925);transform-origin:0 0">FARGATE</div>
<div class="t n" style="left:910.70px;top:368.45px;font-size:10.1px;line-height:10.1px;color:#444;font-weight:400;font-style:normal;transform:scaleX(0.95);transform-origin:0 0">1.1.0</div>
<div class="r" style="left:183.10px;top:406.00px;width:807.00px;height:1.00px;background:#e2e2e2"></div>
<div class="r" style="left:189.20px;top:390.40px;width:12.00px;height:12.00px;background:#fff;border:1px solid #cfcfcf;border-radius:2.5px;box-sizing:border-box"></div>
<div class="t n" style="left:217.10px;top:390.63px;font-size:10.1px;line-height:10.1px;color:#2d68b5;font-weight:400;font-style:normal;">42996c3a-a93<span style="color:#444">…</span></div>
<div class="t n" style="left:302.90px;top:390.63px;font-size:10.1px;line-height:10.1px;color:#2d68b5;font-weight:400;font-style:normal;">vk-podspec_d<span style="color:#444">…</span></div>
<div class="t n" style="left:389.90px;top:391.05px;font-size:9.6px;line-height:9.6px;color:#444;font-weight:400;font-style:normal;letter-spacing:0.6px">--</div>
<div class="t n" style="left:476.90px;top:390.63px;font-size:10.1px;line-height:10.1px;color:#444;font-weight:400;font-style:normal;transform:scaleX(0.925);transform-origin:0 0">PENDING</div>
<div class="t n" style="left:563.50px;top:390.63px;font-size:10.1px;line-height:10.1px;color:#444;font-weight:400;font-style:normal;transform:scaleX(0.925);transform-origin:0 0">RUNNING</div>
<div class="t n" style="left:649.80px;top:390.63px;font-size:10.1px;line-height:10.1px;color:#444;font-weight:400;font-style:normal;">83bea97d-4d4…</div>
<div class="t n" style="left:736.70px;top:390.63px;font-size:10.1px;line-height:10.1px;color:#444;font-weight:400;font-style:normal;">family:vk-pods…</div>
<div class="t n" style="left:823.50px;top:390.63px;font-size:10.1px;line-height:10.1px;color:#444;font-weight:400;font-style:normal;transform:scaleX(0.925);transform-origin:0 0">FARGATE</div>
<div class="t n" style="left:910.70px;top:390.63px;font-size:10.1px;line-height:10.1px;color:#444;font-weight:400;font-style:normal;transform:scaleX(0.95);transform-origin:0 0">1.1.0</div>
<div class="r" style="left:183.10px;top:429.00px;width:807.00px;height:1.00px;background:#e2e2e2"></div>
<div class="r" style="left:189.20px;top:412.60px;width:12.00px;height:12.00px;background:#fff;border:1px solid #cfcfcf;border-radius:2.5px;box-sizing:border-box"></div>
<div class="t n" style="left:217.10px;top:412.81px;font-size:10.1px;line-height:10.1px;color:#2d68b5;font-weight:400;font-style:normal;">4b7d2fce-7d3<span style="color:#444">…</span></div>
<div class="t n" style="left:302.90px;top:412.81px;font-size:10.1px;line-height:10.1px;color:#2d68b5;font-weight:400;font-style:normal;">first-run-task-d<span style="color:#444">…</span></div>
<div class="t n" style="left:389.90px;top:413.23px;font-size:9.6px;line-height:9.6px;color:#444;font-weight:400;font-style:normal;letter-spacing:0.6px">--</div>
<div class="t n" style="left:476.90px;top:412.81px;font-size:10.1px;line-height:10.1px;color:#3d9b3d;font-weight:400;font-style:normal;transform:scaleX(0.925);transform-origin:0 0">RUNNING</div>
<div class="t n" style="left:563.50px;top:412.81px;font-size:10.1px;line-height:10.1px;color:#444;font-weight:400;font-style:normal;transform:scaleX(0.925);transform-origin:0 0">RUNNING</div>
<div class="t n" style="left:649.80px;top:412.81px;font-size:10.1px;line-height:10.1px;color:#444;font-weight:400;font-style:normal;">ecs-svc/92233…</div>
<div class="t n" style="left:736.70px;top:412.81px;font-size:10.1px;line-height:10.1px;color:#444;font-weight:400;font-style:normal;">service:sample…</div>
<div class="t n" style="left:823.50px;top:412.81px;font-size:10.1px;line-height:10.1px;color:#444;font-weight:400;font-style:normal;transform:scaleX(0.925);transform-origin:0 0">FARGATE</div>
<div class="t n" style="left:910.70px;top:412.81px;font-size:10.1px;line-height:10.1px;color:#444;font-weight:400;font-style:normal;transform:scaleX(0.95);transform-origin:0 0">1.1.0</div>
<div class="r" style="left:183.10px;top:451.00px;width:807.00px;height:1.00px;background:#e2e2e2"></div>
<div class="r" style="left:189.20px;top:434.80px;width:12.00px;height:12.00px;background:#fff;border:1px solid #cfcfcf;border-radius:2.5px;box-sizing:border-box"></div>
<div class="t n" style="left:217.10px;top:434.99px;font-size:10.1px;line-height:10.1px;color:#2d68b5;font-weight:400;font-style:normal;">4e7c18fc-239<span style="color:#444">…</span></div>
<div class="t n" style="left:302.90px;top:434.99px;font-size:10.1px;line-height:10.1px;color:#2d68b5;font-weight:400;font-style:normal;">vk-podspec_d<span style="color:#444">…</span></div>
<div class="t n" style="left:389.90px;top:435.41px;font-size:9.6px;line-height:9.6px;color:#444;font-weight:400;font-style:normal;letter-spacing:0.6px">--</div>
<div class="t n" style="left:476.90px;top:434.99px;font-size:10.1px;line-height:10.1px;color:#444;font-weight:400;font-style:normal;transform:scaleX(0.925);transform-origin:0 0">PENDING</div>
<div class="t n" style="left:563.50px;top:434.99px;font-size:10.1px;line-height:10.1px;color:#444;font-weight:400;font-style:normal;transform:scaleX(0.925);transform-origin:0 0">RUNNING</div>
<div class="t n" style="left:649.80px;top:434.99px;font-size:10.1px;line-height:10.1px;color:#444;font-weight:400;font-style:normal;">83db3775-4d4…</div>
<div class="t n" style="left:736.70px;top:434.99px;font-size:10.1px;line-height:10.1px;color:#444;font-weight:400;font-style:normal;">family:vk-pods…</div>
<div class="t n" style="left:823.50px;top:434.99px;font-size:10.1px;line-height:10.1px;color:#444;font-weight:400;font-style:normal;transform:scaleX(0.925);transform-origin:0 0">FARGATE</div>
<div class="t n" style="left:910.70px;top:434.99px;font-size:10.1px;line-height:10.1px;color:#444;font-weight:400;font-style:normal;transform:scaleX(0.95);transform-origin:0 0">1.1.0</div>
<div class="r" style="left:183.10px;top:473.00px;width:807.00px;height:1.00px;background:#e2e2e2"></div>
<div class="r" style="left:189.20px;top:457.00px;width:12.00px;height:12.00px;background:#fff;border:1px solid #cfcfcf;border-radius:2.5px;box-sizing:border-box"></div>
<div class="t n" style="left:217.10px;top:457.17px;font-size:10.1px;line-height:10.1px;color:#2d68b5;font-weight:400;font-style:normal;">4f3d9f4f-c202-<span style="color:#444">…</span></div>
<div class="t n" style="left:302.90px;top:457.17px;font-size:10.1px;line-height:10.1px;color:#2d68b5;font-weight:400;font-style:normal;">vk-podspec_d<span style="color:#444">…</span></div>
<div class="t n" style="left:389.90px;top:457.59px;font-size:9.6px;line-height:9.6px;color:#444;font-weight:400;font-style:normal;letter-spacing:0.6px">--</div>
<div class="t n" style="left:476.90px;top:457.17px;font-size:10.1px;line-height:10.1px;color:#3d9b3d;font-weight:400;font-style:normal;transform:scaleX(0.925);transform-origin:0 0">RUNNING</div>
<div class="t n" style="left:563.50px;top:457.17px;font-size:10.1px;line-height:10.1px;color:#444;font-weight:400;font-style:normal;transform:scaleX(0.925);transform-origin:0 0">RUNNING</div>
<div class="t n" style="left:649.80px;top:457.17px;font-size:10.1px;line-height:10.1px;color:#444;font-weight:400;font-style:normal;">83b619d2-4d4…</div>
<div class="t n" style="left:736.70px;top:457.17px;font-size:10.1px;line-height:10.1px;color:#444;font-weight:400;font-style:normal;">family:vk-pods…</div>
<div class="t n" style="left:823.50px;top:457.17px;font-size:10.1px;line-height:10.1px;color:#444;font-weight:400;font-style:normal;transform:scaleX(0.925);transform-origin:0 0">FARGATE</div>
<div class="t n" style="left:910.70px;top:457.17px;font-size:10.1px;line-height:10.1px;color:#444;font-weight:400;font-style:normal;transform:scaleX(0.95);transform-origin:0 0">1.1.0</div>
<div class="r" style="left:183.10px;top:496.00px;width:807.00px;height:1.00px;background:#e2e2e2"></div>
<div class="r" style="left:189.20px;top:479.20px;width:12.00px;height:12.00px;background:#fff;border:1px solid #cfcfcf;border-radius:2.5px;box-sizing:border-box"></div>
<div class="t n" style="left:217.10px;top:479.35px;font-size:10.1px;line-height:10.1px;color:#2d68b5;font-weight:400;font-style:normal;">5e68655c-025<span style="color:#444">…</span></div>
<div class="t n" style="left:302.90px;top:479.35px;font-size:10.1px;line-height:10.1px;color:#2d68b5;font-weight:400;font-style:normal;">vk-podspec_d<span style="color:#444">…</span></div>
<div class="t n" style="left:389.90px;top:479.77px;font-size:9.6px;line-height:9.6px;color:#444;font-weight:400;font-style:normal;letter-spacing:0.6px">--</div>
<div class="t n" style="left:476.90px;top:479.35px;font-size:10.1px;line-height:10.1px;color:#3d9b3d;font-weight:400;font-style:normal;transform:scaleX(0.925);transform-origin:0 0">RUNNING</div>
<div class="t n" style="left:563.50px;top:479.35px;font-size:10.1px;line-height:10.1px;color:#444;font-weight:400;font-style:normal;transform:scaleX(0.925);transform-origin:0 0">RUNNING</div>
<div class="t n" style="left:649.80px;top:479.35px;font-size:10.1px;line-height:10.1px;color:#444;font-weight:400;font-style:normal;">83c533f6-4d4…</div>
<div class="t n" style="left:736.70px;top:479.35px;font-size:10.1px;line-height:10.1px;color:#444;font-weight:400;font-style:normal;">family:vk-pods…</div>
<div class="t n" style="left:823.50px;top:479.35px;font-size:10.1px;line-height:10.1px;color:#444;font-weight:400;font-style:normal;transform:scaleX(0.925);transform-origin:0 0">FARGATE</div>
<div class="t n" style="left:910.70px;top:479.35px;font-size:10.1px;line-height:10.1px;color:#444;font-weight:400;font-style:normal;transform:scaleX(0.95);transform-origin:0 0">1.1.0</div>
<div class="r" style="left:183.10px;top:517.00px;width:807.00px;height:1.00px;background:#e2e2e2"></div>
<div class="r" style="left:189.20px;top:501.40px;width:12.00px;height:12.00px;background:#fff;border:1px solid #cfcfcf;border-radius:2.5px;box-sizing:border-box"></div>
<div class="t n" style="left:217.10px;top:501.53px;font-size:10.1px;line-height:10.1px;color:#2d68b5;font-weight:400;font-style:normal;">935fc8d6-bb9f<span style="color:#444">…</span></div>
<div class="t n" style="left:302.90px;top:501.53px;font-size:10.1px;line-height:10.1px;color:#2d68b5;font-weight:400;font-style:normal;">vk-podspec_d<span style="color:#444">…</span></div>
<div class="t n" style="left:389.90px;top:501.95px;font-size:9.6px;line-height:9.6px;color:#444;font-weight:400;font-style:normal;letter-spacing:0.6px">--</div>
<div class="t n" style="left:476.90px;top:501.53px;font-size:10.1px;line-height:10.1px;color:#444;font-weight:400;font-style:normal;transform:scaleX(0.925);transform-origin:0 0">PROVISIONING</div>
<div class="t n" style="left:563.50px;top:501.53px;font-size:10.1px;line-height:10.1px;color:#444;font-weight:400;font-style:normal;transform:scaleX(0.925);transform-origin:0 0">RUNNING</div>
<div class="t n" style="left:649.80px;top:501.53px;font-size:10.1px;line-height:10.1px;color:#444;font-weight:400;font-style:normal;">83d962bf-4d4…</div>
<div class="t n" style="left:736.70px;top:501.53px;font-size:10.1px;line-height:10.1px;color:#444;font-weight:400;font-style:normal;">family:vk-pods…</div>
<div class="t n" style="left:823.50px;top:501.53px;font-size:10.1px;line-height:10.1px;color:#444;font-weight:400;font-style:normal;transform:scaleX(0.925);transform-origin:0 0">FARGATE</div>
<div class="t n" style="left:910.70px;top:501.53px;font-size:10.1px;line-height:10.1px;color:#444;font-weight:400;font-style:normal;transform:scaleX(0.95);transform-origin:0 0">1.1.0</div>
<div class="r" style="left:183.10px;top:540.00px;width:807.00px;height:1.00px;background:#e2e2e2"></div>
<div class="r" style="left:189.20px;top:523.60px;width:12.00px;height:12.00px;background:#fff;border:1px solid #cfcfcf;border-radius:2.5px;box-sizing:border-box"></div>
<div class="t n" style="left:217.10px;top:523.71px;font-size:10.1px;line-height:10.1px;color:#2d68b5;font-weight:400;font-style:normal;">9ad2176c-6d2<span style="color:#444">…</span></div>
<div class="t n" style="left:302.90px;top:523.71px;font-size:10.1px;line-height:10.1px;color:#2d68b5;font-weight:400;font-style:normal;">vk-podspec_d<span style="color:#444">…</span></div>
<div class="t n" style="left:389.90px;top:524.13px;font-size:9.6px;line-height:9.6px;color:#444;font-weight:400;font-style:normal;letter-spacing:0.6px">--</div>
<div class="t n" style="left:476.90px;top:523.71px;font-size:10.1px;line-height:10.1px;color:#444;font-weight:400;font-style:normal;transform:scaleX(0.925);transform-origin:0 0">PROVISIONING</div>
<div class="t n" style="left:563.50px;top:523.71px;font-size:10.1px;line-height:10.1px;color:#444;font-weight:400;font-style:normal;transform:scaleX(0.925);transform-origin:0 0">RUNNING</div>
<div class="t n" style="left:649.80px;top:523.71px;font-size:10.1px;line-height:10.1px;color:#444;font-weight:400;font-style:normal;">83bd0532-4d4…</div>
<div class="t n" style="left:736.70px;top:523.71px;font-size:10.1px;line-height:10.1px;color:#444;font-weight:400;font-style:normal;">family:vk-pods…</div>
<div class="t n" style="left:823.50px;top:523.71px;font-size:10.1px;line-height:10.1px;color:#444;font-weight:400;font-style:normal;transform:scaleX(0.925);transform-origin:0 0">FARGATE</div>
<div class="t n" style="left:910.70px;top:523.71px;font-size:10.1px;line-height:10.1px;color:#444;font-weight:400;font-style:normal;transform:scaleX(0.95);transform-origin:0 0">1.1.0</div>
<div class="r" style="left:183.10px;top:562.00px;width:807.00px;height:1.00px;background:#e2e2e2"></div>
<div class="r" style="left:189.20px;top:545.80px;width:12.00px;height:12.00px;background:#fff;border:1px solid #cfcfcf;border-radius:2.5px;box-sizing:border-box"></div>
<div class="t n" style="left:217.10px;top:545.89px;font-size:10.1px;line-height:10.1px;color:#2d68b5;font-weight:400;font-style:normal;">adb2eeb9-d2f<span style="color:#444">…</span></div>
<div class="t n" style="left:302.90px;top:545.89px;font-size:10.1px;line-height:10.1px;color:#2d68b5;font-weight:400;font-style:normal;">vk-podspec_d<span style="color:#444">…</span></div>
<div class="t n" style="left:389.90px;top:546.31px;font-size:9.6px;line-height:9.6px;color:#444;font-weight:400;font-style:normal;letter-spacing:0.6px">--</div>
<div class="t n" style="left:476.90px;top:545.89px;font-size:10.1px;line-height:10.1px;color:#444;font-weight:400;font-style:normal;transform:scaleX(0.925);transform-origin:0 0">PENDING</div>
<div class="t n" style="left:563.50px;top:545.89px;font-size:10.1px;line-height:10.1px;color:#444;font-weight:400;font-style:normal;transform:scaleX(0.925);transform-origin:0 0">RUNNING</div>
<div class="t n" style="left:649.80px;top:545.89px;font-size:10.1px;line-height:10.1px;color:#444;font-weight:400;font-style:normal;">83d0343b-4d4…</div>
<div class="t n" style="left:736.70px;top:545.89px;font-size:10.1px;line-height:10.1px;color:#444;font-weight:400;font-style:normal;">family:vk-pods…</div>
<div class="t n" style="left:823.50px;top:545.89px;font-size:10.1px;line-height:10.1px;color:#444;font-weight:400;font-style:normal;transform:scaleX(0.925);transform-origin:0 0">FARGATE</div>
<div class="t n" style="left:910.70px;top:545.89px;font-size:10.1px;line-height:10.1px;color:#444;font-weight:400;font-style:normal;transform:scaleX(0.95);transform-origin:0 0">1.1.0</div>
<div class="r" style="left:183.10px;top:584.00px;width:807.00px;height:1.00px;background:#e2e2e2"></div>
<div class="r" style="left:189.20px;top:568.00px;width:12.00px;height:12.00px;background:#fff;border:1px solid #cfcfcf;border-radius:2.5px;box-sizing:border-box"></div>
<div class="t n" style="left:217.10px;top:568.07px;font-size:10.1px;line-height:10.1px;color:#2d68b5;font-weight:400;font-style:normal;">bbb38d50-e3c<span style="color:#444">…</span></div>
<div class="t n" style="left:302.90px;top:568.07px;font-size:10.1px;line-height:10.1px;color:#2d68b5;font-weight:400;font-style:normal;">vk-podspec_d<span style="color:#444">…</span></div>
<div class="t n" style="left:389.90px;top:568.49px;font-size:9.6px;line-height:9.6px;color:#444;font-weight:400;font-style:normal;letter-spacing:0.6px">--</div>
<div class="t n" style="left:476.90px;top:568.07px;font-size:10.1px;line-height:10.1px;color:#444;font-weight:400;font-style:normal;transform:scaleX(0.925);transform-origin:0 0">PENDING</div>
<div class="t n" style="left:563.50px;top:568.07px;font-size:10.1px;line-height:10.1px;color:#444;font-weight:400;font-style:normal;transform:scaleX(0.925);transform-origin:0 0">RUNNING</div>
<div class="t n" style="left:649.80px;top:568.07px;font-size:10.1px;line-height:10.1px;color:#444;font-weight:400;font-style:normal;">83cbfb86-4d4…</div>
<div class="t n" style="left:736.70px;top:568.07px;font-size:10.1px;line-height:10.1px;color:#444;font-weight:400;font-style:normal;">family:vk-pods…</div>
<div class="t n" style="left:823.50px;top:568.07px;font-size:10.1px;line-height:10.1px;color:#444;font-weight:400;font-style:normal;transform:scaleX(0.925);transform-origin:0 0">FARGATE</div>
<div class="t n" style="left:910.70px;top:568.07px;font-size:10.1px;line-height:10.1px;color:#444;font-weight:400;font-style:normal;transform:scaleX(0.95);transform-origin:0 0">1.1.0</div>
<div class="r" style="left:183.10px;top:607.00px;width:807.00px;height:1.00px;background:#e2e2e2"></div>
<div class="r" style="left:189.20px;top:590.20px;width:12.00px;height:12.00px;background:#fff;border:1px solid #cfcfcf;border-radius:2.5px;box-sizing:border-box"></div>
<div class="t n" style="left:217.10px;top:590.25px;font-size:10.1px;line-height:10.1px;color:#2d68b5;font-weight:400;font-style:normal;">dbc91344-228<span style="color:#444">…</span></div>
<div class="t n" style="left:302.90px;top:590.25px;font-size:10.1px;line-height:10.1px;color:#2d68b5;font-weight:400;font-style:normal;">vk-podspec_d<span style="color:#444">…</span></div>
<div class="t n" style="left:389.90px;top:590.67px;font-size:9.6px;line-height:9.6px;color:#444;font-weight:400;font-style:normal;letter-spacing:0.6px">--</div>
<div class="t n" style="left:476.90px;top:590.25px;font-size:10.1px;line-height:10.1px;color:#444;font-weight:400;font-style:normal;transform:scaleX(0.925);transform-origin:0 0">PENDING</div>
<div class="t n" style="left:563.50px;top:590.25px;font-size:10.1px;line-height:10.1px;color:#444;font-weight:400;font-style:normal;transform:scaleX(0.925);transform-origin:0 0">RUNNING</div>
<div class="t n" style="left:649.80px;top:590.25px;font-size:10.1px;line-height:10.1px;color:#444;font-weight:400;font-style:normal;">83cb8a5a-4d4…</div>
<div class="t n" style="left:736.70px;top:590.25px;font-size:10.1px;line-height:10.1px;color:#444;font-weight:400;font-style:normal;">family:vk-pods…</div>
<div class="t n" style="left:823.50px;top:590.25px;font-size:10.1px;line-height:10.1px;color:#444;font-weight:400;font-style:normal;transform:scaleX(0.925);transform-origin:0 0">FARGATE</div>
<div class="t n" style="left:910.70px;top:590.25px;font-size:10.1px;line-height:10.1px;color:#444;font-weight:400;font-style:normal;transform:scaleX(0.95);transform-origin:0 0">1.1.0</div>
<div class="r" style="left:183.10px;top:628.00px;width:807.00px;height:1.00px;background:#e2e2e2"></div>
<div class="r" style="left:189.20px;top:612.40px;width:12.00px;height:12.00px;background:#fff;border:1px solid #cfcfcf;border-radius:2.5px;box-sizing:border-box"></div>
<div class="t n" style="left:217.10px;top:612.43px;font-size:10.1px;line-height:10.1px;color:#2d68b5;font-weight:400;font-style:normal;">f5a3e162-d65<span style="color:#444">…</span></div>
<div class="t n" style="left:302.90px;top:612.43px;font-size:10.1px;line-height:10.1px;color:#2d68b5;font-weight:400;font-style:normal;">vk-podspec_d<span style="color:#444">…</span></div>
<div class="t n" style="left:389.90px;top:612.85px;font-size:9.6px;line-height:9.6px;color:#444;font-weight:400;font-style:normal;letter-spacing:0.6px">--</div>
<div class="t n" style="left:476.90px;top:612.43px;font-size:10.1px;line-height:10.1px;color:#444;font-weight:400;font-style:normal;transform:scaleX(0.925);transform-origin:0 0">PENDING</div>
<div class="t n" style="left:563.50px;top:612.43px;font-size:10.1px;line-height:10.1px;color:#444;font-weight:400;font-style:normal;transform:scaleX(0.925);transform-origin:0 0">RUNNING</div>
<div class="t n" style="left:649.80px;top:612.43px;font-size:10.1px;line-height:10.1px;color:#444;font-weight:400;font-style:normal;">83c506bb-4d4…</div>
<div class="t n" style="left:736.70px;top:612.43px;font-size:10.1px;line-height:10.1px;color:#444;font-weight:400;font-style:normal;">family:vk-pods…</div>
<div class="t n" style="left:823.50px;top:612.43px;font-size:10.1px;line-height:10.1px;color:#444;font-weight:400;font-style:normal;transform:scaleX(0.925);transform-origin:0 0">FARGATE</div>
<div class="t n" style="left:910.70px;top:612.43px;font-size:10.1px;line-height:10.1px;color:#444;font-weight:400;font-style:normal;transform:scaleX(0.95);transform-origin:0 0">1.1.0</div>
<div class="r" style="left:183.10px;top:651.00px;width:807.00px;height:1.00px;background:#e2e2e2"></div>
<div class="r" style="left:189.20px;top:634.60px;width:12.00px;height:12.00px;background:#fff;border:1px solid #cfcfcf;border-radius:2.5px;box-sizing:border-box"></div>
<div class="t n" style="left:217.10px;top:634.61px;font-size:10.1px;line-height:10.1px;color:#2d68b5;font-weight:400;font-style:normal;">f8e8e250-d2a<span style="color:#444">…</span></div>
<div class="t n" style="left:302.90px;top:634.61px;font-size:10.1px;line-height:10.1px;color:#2d68b5;font-weight:400;font-style:normal;">vk-podspec_d<span style="color:#444">…</span></div>
<div class="t n" style="left:389.90px;top:635.03px;font-size:9.6px;line-height:9.6px;color:#444;font-weight:400;font-style:normal;letter-spacing:0.6px">--</div>
<div class="t n" style="left:476.90px;top:634.61px;font-size:10.1px;line-height:10.1px;color:#444;font-weight:400;font-style:normal;transform:scaleX(0.925);transform-origin:0 0">PENDING</div>
<div class="t n" style="left:563.50px;top:634.61px;font-size:10.1px;line-height:10.1px;color:#444;font-weight:400;font-style:normal;transform:scaleX(0.925);transform-origin:0 0">RUNNING</div>
<div class="t n" style="left:649.80px;top:634.61px;font-size:10.1px;line-height:10.1px;color:#444;font-weight:400;font-style:normal;">83db56d6-4d4…</div>
<div class="t n" style="left:736.70px;top:634.61px;font-size:10.1px;line-height:10.1px;color:#444;font-weight:400;font-style:normal;">family:vk-pods…</div>
<div class="t n" style="left:823.50px;top:634.61px;font-size:10.1px;line-height:10.1px;color:#444;font-weight:400;font-style:normal;transform:scaleX(0.925);transform-origin:0 0">FARGATE</div>
<div class="t n" style="left:910.70px;top:634.61px;font-size:10.1px;line-height:10.1px;color:#444;font-weight:400;font-style:normal;transform:scaleX(0.95);transform-origin:0 0">1.1.0</div>
<div class="r" style="left:183.10px;top:673.00px;width:807.00px;height:1.00px;background:#e2e2e2"></div>
<div class="r" style="left:189.20px;top:656.80px;width:12.00px;height:12.00px;background:#fff;border:1px solid #cfcfcf;border-radius:2.5px;box-sizing:border-box"></div>
<div class="t n" style="left:217.10px;top:656.79px;font-size:10.1px;line-height:10.1px;color:#2d68b5;font-weight:400;font-style:normal;">fb47fb3a-4fb7<span style="color:#444">…</span></div>
<div class="t n" style="left:302.90px;top:656.79px;font-size:10.1px;line-height:10.1px;color:#2d68b5;font-weight:400;font-style:normal;">vk-podspec_d<span style="color:#444">…</span></div>
<div class="t n" style="left:389.90px;top:657.21px;font-size:9.6px;line-height:9.6px;color:#444;font-weight:400;font-style:normal;letter-spacing:0.6px">--</div>
<div class="t n" style="left:476.90px;top:656.79px;font-size:10.1px;line-height:10.1px;color:#3d9b3d;font-weight:400;font-style:normal;transform:scaleX(0.925);transform-origin:0 0">RUNNING</div>
<div class="t n" style="left:563.50px;top:656.79px;font-size:10.1px;line-height:10.1px;color:#444;font-weight:400;font-style:normal;transform:scaleX(0.925);transform-origin:0 0">RUNNING</div>
<div class="t n" style="left:649.80px;top:656.79px;font-size:10.1px;line-height:10.1px;color:#444;font-weight:400;font-style:normal;">83b13717-4d4…</div>
<div class="t n" style="left:736.70px;top:656.79px;font-size:10.1px;line-height:10.1px;color:#444;font-weight:400;font-style:normal;">family:vk-pods…</div>
<div class="t n" style="left:823.50px;top:656.79px;font-size:10.1px;line-height:10.1px;color:#444;font-weight:400;font-style:normal;transform:scaleX(0.925);transform-origin:0 0">FARGATE</div>
<div class="t n" style="left:910.70px;top:656.79px;font-size:10.1px;line-height:10.1px;color:#444;font-weight:400;font-style:normal;transform:scaleX(0.95);transform-origin:0 0">1.1.0</div>
<div class="r" style="left:0.00px;top:661.80px;width:1024.00px;height:2.20px;background:linear-gradient(#56627a,#28354e)"></div>
</body></html>
